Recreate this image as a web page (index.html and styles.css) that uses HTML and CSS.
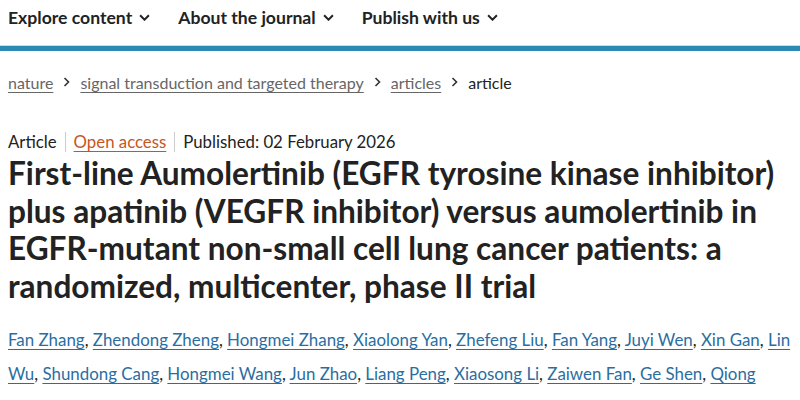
FILE: index.html
```html
<!DOCTYPE html>
<html lang="en">
<head>
<meta charset="utf-8">
<title>Article</title>
<link rel="stylesheet" href="styles.css">
</head>
<body>
<header class="nav">
  <ul class="nav-list">
    <li class="nav-item">Explore content <svg class="caret" viewBox="0 0 10 6" width="11" height="7"><path d="M1 1l4 4 4-4" fill="none" stroke="#222" stroke-width="1.8"/></svg></li>
    <li class="nav-item">About the journal <svg class="caret" viewBox="0 0 10 6" width="11" height="7"><path d="M1 1l4 4 4-4" fill="none" stroke="#222" stroke-width="1.8"/></svg></li>
    <li class="nav-item">Publish with us <svg class="caret" viewBox="0 0 10 6" width="11" height="7"><path d="M1 1l4 4 4-4" fill="none" stroke="#222" stroke-width="1.8"/></svg></li>
  </ul>
</header>
<div class="bar"></div>
<nav class="crumbs">
  <a class="crumb" href="#">nature</a>
  <svg class="chev" viewBox="0 0 6 10" width="7" height="10"><path d="M1 1l4 4-4 4" fill="none" stroke="#333" stroke-width="1.6"/></svg>
  <a class="crumb" href="#">signal transduction and targeted therapy</a>
  <svg class="chev" viewBox="0 0 6 10" width="7" height="10"><path d="M1 1l4 4-4 4" fill="none" stroke="#333" stroke-width="1.6"/></svg>
  <a class="crumb" href="#">articles</a>
  <svg class="chev" viewBox="0 0 6 10" width="7" height="10"><path d="M1 1l4 4-4 4" fill="none" stroke="#333" stroke-width="1.6"/></svg>
  <span class="crumb-current">article</span>
</nav>
<main class="article">
  <ul class="meta">
    <li class="meta-item">Article</li>
    <li class="meta-item"><a class="oa" href="#">Open access</a></li>
    <li class="meta-item">Published: 02 February 2026</li>
  </ul>
  <h1 class="title">First-line Aumolertinib (EGFR tyrosine kinase inhibitor) plus apatinib (VEGFR inhibitor) versus aumolertinib in EGFR-mutant non-small cell lung cancer patients: a randomized, multicenter, phase II trial</h1>
  <p class="authors">
    <a href="#">Fan Zhang</a>, <a href="#">Zhendong Zheng</a>, <a href="#">Hongmei Zhang</a>, <a href="#">Xiaolong Yan</a>, <a href="#">Zhefeng Liu</a>, <a href="#">Fan Yang</a>, <a href="#">Juyi Wen</a>, <a href="#">Xin Gan</a>, <a href="#">Lin Wu</a>, <a href="#">Shundong Cang</a>, <a href="#">Hongmei Wang</a>, <a href="#">Jun Zhao</a>, <a href="#">Liang Peng</a>, <a href="#">Xiaosong Li</a>, <a href="#">Zaiwen Fan</a>, <a href="#">Ge Shen</a>, <a href="#">Qiong Zhou</a>, <a href="#">Jinjian Zou</a>, <a href="#">Yu Xu</a>, <a href="#">Yuelai Zhang</a>, <a href="#">Mingfeng Zhao</a> <svg class="mail" viewBox="0 0 16 12" width="17" height="13"><rect x="1" y="1" width="14" height="10" fill="none" stroke="#2a6ea1" stroke-width="1.6"/><path d="M1 1l7 6 7-6" fill="none" stroke="#2a6ea1" stroke-width="1.6"/></svg>, <a href="#">Shengli Cai</a> <svg class="mail" viewBox="0 0 16 12" width="17" height="13"><rect x="1" y="1" width="14" height="10" fill="none" stroke="#2a6ea1" stroke-width="1.6"/><path d="M1 1l7 6 7-6" fill="none" stroke="#2a6ea1" stroke-width="1.6"/></svg> &amp; <a href="#">Yi He</a> <svg class="mail" viewBox="0 0 16 12" width="17" height="13"><rect x="1" y="1" width="14" height="10" fill="none" stroke="#2a6ea1" stroke-width="1.6"/><path d="M1 1l7 6 7-6" fill="none" stroke="#2a6ea1" stroke-width="1.6"/></svg>
  </p>
</main>
</body>
</html>
```

FILE: styles.css
```css
html, body {
  margin: 0;
  padding: 0;
  background: #fff;
  font-family: Lato, "Noto Sans", sans-serif;
  color: #222;
}
.nav {
  height: 45px;
  padding: 0 8px;
  display: flex;
  align-items: center;
}
.nav-list {
  list-style: none;
  margin: 0;
  padding: 0;
  display: flex;
  gap: 28px;
}
.nav-item {
  font-size: 17.6px;
  font-weight: 700;
  color: #222;
  display: flex;
  align-items: center;
  gap: 7px;
  margin-top: -11px;
}
.bar {
  height: 5px;
  background: #2a8ab3;
  border-top: 1px solid #bfe0ec;
}
.crumbs {
  display: flex;
  align-items: center;
  gap: 10px;
  padding: 0 8px;
  margin-top: 19px;
  font-size: 16px;
  height: 24px;
}
.crumb {
  color: #666;
  text-decoration: underline;
  text-underline-offset: 3px;
}
.crumb-current {
  color: #222;
}
.article {
  padding: 0 8px;
  margin-top: 38px;
}
.meta {
  list-style: none;
  margin: 0;
  padding: 0;
  display: flex;
  font-size: 16.8px;
  color: #222;
}
.meta-item {
  padding: 0 8px;
  border-left: 1px solid #ccc;
  line-height: 20px;
}
.meta-item:first-child {
  padding-left: 0;
  border-left: none;
}
.oa {
  color: #c4571d;
  text-decoration: underline;
  text-underline-offset: 3px;
}
.title {
  margin: 3px 0 0;
  font-size: 31.6px;
  font-weight: 700;
  line-height: 37.5px;
  color: #222;
}
.authors {
  margin: 18px 0 0;
  font-size: 16.9px;
  line-height: 34px;
  color: #222;
}
.authors a {
  color: #2a6ea1;
  text-decoration: underline;
  text-underline-offset: 3px;
}
.mail {
  vertical-align: -2px;
}
```
